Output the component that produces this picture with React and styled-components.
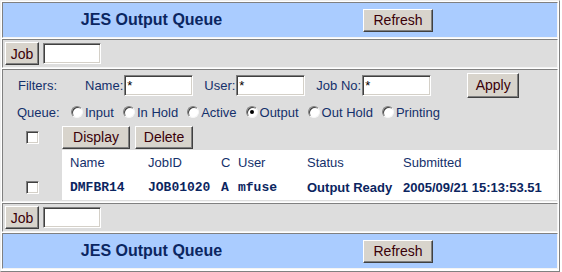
import React from "react";
import styled, { createGlobalStyle } from "styled-components";

const GlobalStyle = createGlobalStyle`
  body {
    margin: 0;
    background: #ffffff;
    font-family: "Liberation Sans", Arial, sans-serif;
  }
`;

const Frame = styled.div`
  box-sizing: border-box;
  width: 560px;
  height: 272px;
  border: 1px solid;
  border-color: #f0f0f0 #808080 #808080 #f0f0f0;
  padding: 1px;
  display: flex;
  flex-direction: column;
  gap: 1px;
`;

const Cell = styled.div`
  border: 1px solid;
  border-color: #808080 #f4f4f4 #f4f4f4 #808080;
  background: ${(p) => (p.$blue ? "#aaccff" : "#dddddd")};
  height: ${(p) => p.$h}px;
  flex: none;
`;

const HeaderRow = styled(Cell)`
  display: grid;
  grid-template-columns: 297px 1fr;
  align-items: center;
`;

const Title = styled.div`
  text-align: center;
  font-weight: bold;
  font-size: 16px;
  color: #0b2661;
`;

const Button = styled.button`
  box-sizing: border-box;
  width: ${(p) => p.$w}px;
  height: ${(p) => p.$h || 23}px;
  padding: 0;
  margin: 0;
  font-family: "Liberation Sans", Arial, sans-serif;
  font-size: 14px;
  color: #3a0008;
  background: #d8d4cc;
  border: 1px solid;
  border-color: #ffffff #404040 #404040 #ffffff;
  box-shadow: inset -1px -1px #808080;
  cursor: pointer;
`;

const RefreshSlot = styled.div`
  padding-left: 63px;
  display: flex;
`;

const JobRow = styled(Cell)`
  display: flex;
  align-items: center;
  gap: 4px;
  padding-left: 2px;
`;

const TextBox = styled.input`
  box-sizing: border-box;
  width: ${(p) => p.$w}px;
  height: ${(p) => p.$h || 21}px;
  margin: 0;
  padding: 0 2px;
  font-family: "Liberation Sans", Arial, sans-serif;
  font-size: 13px;
  color: #000;
  background: #ffffff;
  border: 1px solid;
  border-color: #808080 #ffffff #ffffff #808080;
  box-shadow: inset 1px 1px #404040, inset -1px -1px #d4d0c8;
  outline: none;
`;

const FilterCell = styled(Cell)`
  display: flex;
  flex-direction: column;
  padding-bottom: 1px;
  box-sizing: content-box;
`;

const Line = styled.div`
  display: flex;
  align-items: center;
  height: ${(p) => p.$h}px;
  padding-left: ${(p) => p.$pl ?? 15}px;
  flex: none;
`;

const Label = styled.span`
  font-size: 13px;
  color: #14306b;
  white-space: nowrap;
  width: ${(p) => (p.$w ? `${p.$w}px` : "auto")};
  margin-left: ${(p) => p.$ml || 0}px;
`;

const Field = styled.label`
  display: flex;
  align-items: center;
  margin-left: ${(p) => p.$ml || 0}px;
  gap: ${(p) => p.$gap ?? 1}px;
`;

const RadioItem = styled.label`
  display: flex;
  align-items: center;
  gap: 2px;
  margin-right: 9px;
  font-size: 13px;
  color: #14306b;
`;

const Radio = styled.span`
  box-sizing: border-box;
  width: 12px;
  height: 12px;
  border-radius: 50%;
  background: #ffffff;
  border: 1px solid;
  border-color: #808080 #f6f6f6 #f6f6f6 #808080;
  box-shadow: inset 1px 1px #404040;
  display: flex;
  align-items: center;
  justify-content: center;
  &::after {
    content: "";
    width: 4px;
    height: 4px;
    border-radius: 50%;
    background: ${(p) => (p.$on ? "#000" : "transparent")};
  }
`;

const Check = styled.span`
  box-sizing: border-box;
  display: block;
  width: 13px;
  height: 13px;
  background: #ffffff;
  border: 1px solid;
  border-color: #808080 #ffffff #ffffff #808080;
  box-shadow: inset 1px 1px #404040, inset -1px -1px #d4d0c8;
`;

const CheckSlot = styled.div`
  width: 59px;
  display: flex;
  justify-content: center;
  flex: none;
`;

const Actions = styled.div`
  display: flex;
  gap: 5px;
`;

const Results = styled.div`
  display: grid;
  grid-template-columns: 59px 78px 73px 17px 69px 96px 1fr;
  grid-auto-rows: 25px;
  height: 51px;
`;

const ResCell = styled.div`
  display: flex;
  align-items: center;
  justify-content: ${(p) => (p.$check ? "center" : "flex-start")};
  padding-left: ${(p) => (p.$check ? 0 : 8)}px;
  background: ${(p) => (p.$check ? "#dddddd" : "#ffffff")};
  font-size: 13px;
  color: ${(p) => (p.$bold ? "#0b2560" : "#14306b")};
  font-weight: ${(p) => (p.$bold ? "bold" : "normal")};
  font-family: ${(p) =>
    p.$mono
      ? '"Liberation Mono", "Courier New", monospace'
      : '"Liberation Sans", Arial, sans-serif'};
  white-space: nowrap;
`;

const queues = ["Input", "In Hold", "Active", "Output", "Out Hold", "Printing"];
const headers = ["Name", "JobID", "C", "User", "Status", "Submitted"];
const job = {
  name: "DMFBR14",
  id: "JOB01020",
  cls: "A",
  user: "mfuse",
  status: "Output Ready",
  submitted: "2005/09/21 15:13:53.51",
};

const Header = () => (
  <HeaderRow $blue $h={34}>
    <Title>JES Output Queue</Title>
    <RefreshSlot>
      <Button $w={70}>Refresh</Button>
    </RefreshSlot>
  </HeaderRow>
);

const JobBar = () => (
  <JobRow $h={27}>
    <Button $w={34}>Job</Button>
    <TextBox $w={58} />
  </JobRow>
);

export default function App() {
  return (
    <>
      <GlobalStyle />
      <Frame>
        <Header />
        <JobBar />
        <FilterCell $h={130}>
          <Line $h={30}>
            <Label $w={67}>Filters:</Label>
            <Field>
              <Label>Name:</Label>
              <TextBox $w={69} defaultValue="*" />
            </Field>
            <Field $ml={11}>
              <Label>User:</Label>
              <TextBox $w={69} defaultValue="*" />
            </Field>
            <Field $ml={11}>
              <Label>Job No:</Label>
              <TextBox $w={69} defaultValue="*" />
            </Field>
            <Field $ml={36}>
              <Button $w={52} $h={25}>
                Apply
              </Button>
            </Field>
          </Line>
          <Line $h={24} $pl={14}>
            <Label $w={54}>Queue:</Label>
            {queues.map((q) => (
              <RadioItem key={q}>
                <Radio $on={q === "Output"} />
                {q}
              </RadioItem>
            ))}
          </Line>
          <Line $h={26} $pl={0}>
            <CheckSlot>
              <Check />
            </CheckSlot>
            <Actions>
              <Button $w={68}>Display</Button>
              <Button $w={58}>Delete</Button>
            </Actions>
          </Line>
          <Results>
            <ResCell $check />
            {headers.map((h) => (
              <ResCell key={h}>{h}</ResCell>
            ))}
            <ResCell $check>
              <Check />
            </ResCell>
            <ResCell $bold $mono>{job.name}</ResCell>
            <ResCell $bold $mono>{job.id}</ResCell>
            <ResCell $bold $mono>{job.cls}</ResCell>
            <ResCell $bold $mono>{job.user}</ResCell>
            <ResCell $bold>{job.status}</ResCell>
            <ResCell $bold>{job.submitted}</ResCell>
          </Results>
        </FilterCell>
        <JobBar />
        <Header />
      </Frame>
    </>
  );
}
